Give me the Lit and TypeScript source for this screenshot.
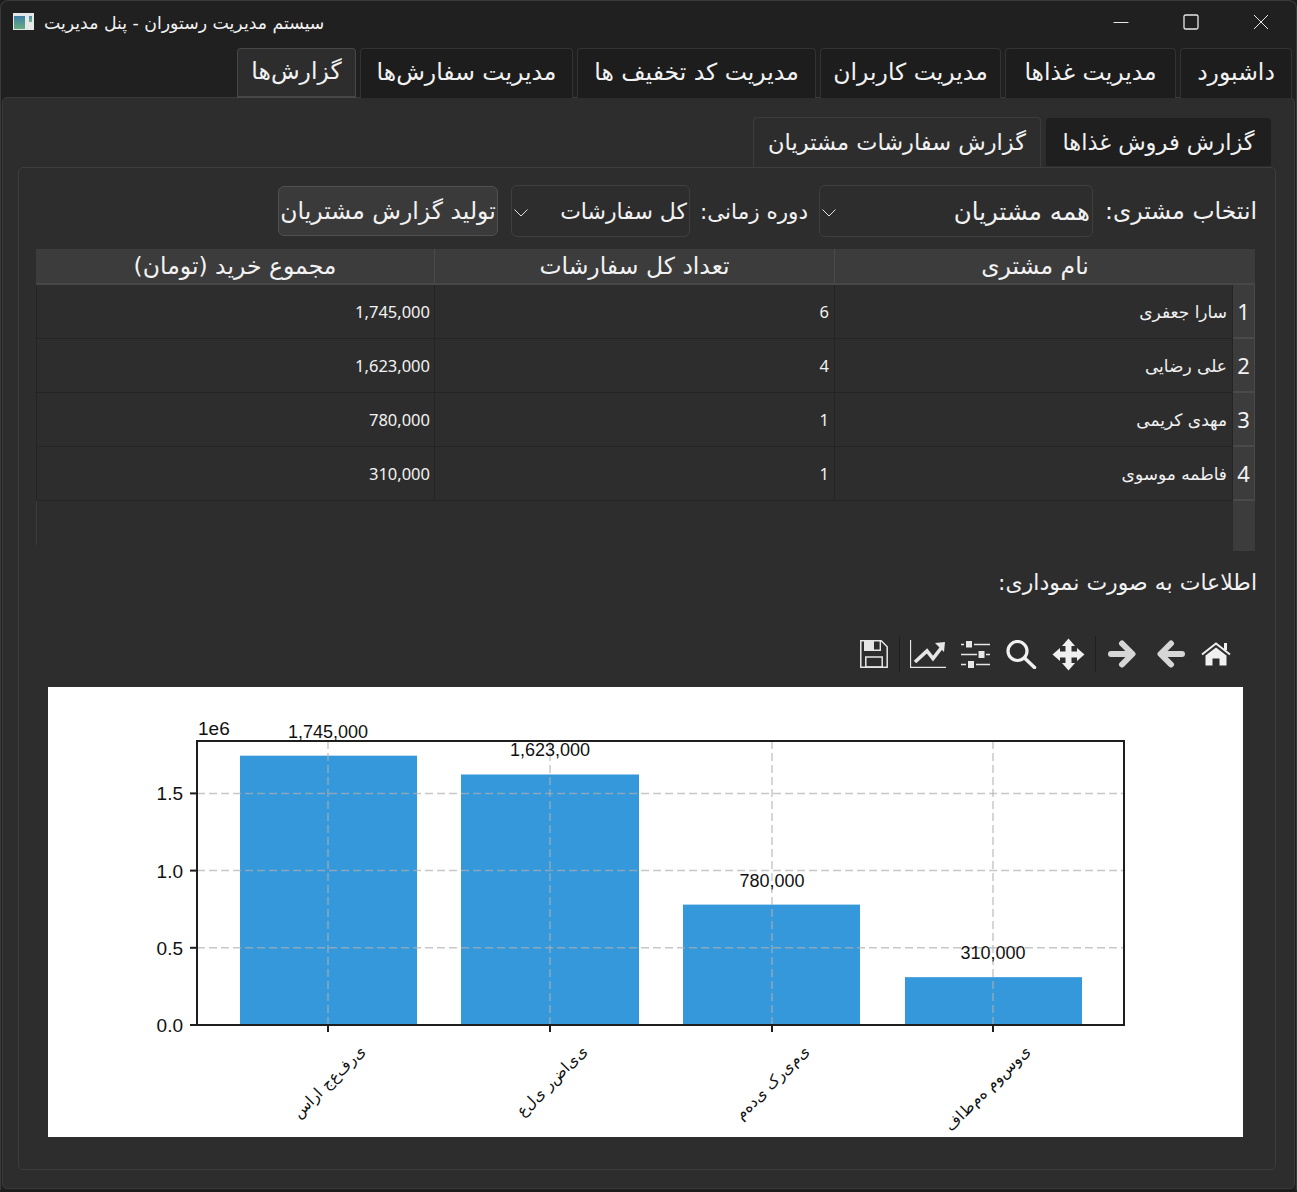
import { LitElement, css, html, svg } from 'lit';
import { customElement } from 'lit/decorators.js';

const rows = [
  ['سارا جعفری', '6', '1,745,000'],
  ['علی رضایی', '4', '1,623,000'],
  ['مهدی کریمی', '1', '780,000'],
  ['فاطمه موسوی', '1', '310,000'],
];

const tabs = [
  ['داشبورد', 112],
  ['مدیریت غذاها', 171],
  ['مدیریت کاربران', 181],
  ['مدیریت کد تخفیف ها', 239],
  ['مدیریت سفارش‌ها', 213],
  ['گزارش‌ها', 119],
] as const;

// plot area of the matplotlib figure, in figure coords
const plot = { left: 149, right: 1076, top: 54, bottom: 338 };
const scale = 284 / 1.84;
const bars = [
  { x: 192, w: 177, value: 1745000, label: '1,745,000', name: 'سارا جعفری', tick: 280 },
  { x: 413, w: 178, value: 1623000, label: '1,623,000', name: 'علی رضایی', tick: 502 },
  { x: 635, w: 177, value: 780000, label: '780,000', name: 'مهدی کریمی', tick: 724 },
  { x: 857, w: 177, value: 310000, label: '310,000', name: 'فاطمه موسوی', tick: 945 },
];
const yTicks = ['0.0', '0.5', '1.0', '1.5'];

// matplotlib draws the farsi names unshaped and left to right
const unshaped = (s: string) => [...s].join('\u200c');

function chart() {
  return html`<svg class="chart" viewBox="0 0 1195 450" width="1195" height="450">
    ${bars.map((b) => {
      const h = (b.value / 1e6) * scale;
      return svg`<rect x=${b.x} y=${plot.bottom - h} width=${b.w} height=${h} fill="#3498db"></rect>`;
    })}
    ${yTicks.map((t, i) => {
      const y = plot.bottom - i * 77.2;
      return svg`
        <line x1=${plot.left} x2=${plot.right} y1=${y} y2=${y} class="grid"></line>
        <line x1=${plot.left - 7} x2=${plot.left} y1=${y} y2=${y} class="tick"></line>
        <text x=${plot.left - 14} y=${y + 7} text-anchor="end" class="num">${t}</text>`;
    })}
    ${bars.map(
      (b) => svg`
        <line x1=${b.tick} x2=${b.tick} y1=${plot.top} y2=${plot.bottom} class="grid"></line>
        <line x1=${b.tick} x2=${b.tick} y1=${plot.bottom} y2=${plot.bottom + 7} class="tick"></line>
        <text x=${b.tick} y=${plot.bottom - (b.value / 1e6) * scale - 18} text-anchor="middle" class="val">${b.label}</text>
        <text transform="translate(${b.tick + 38} ${plot.bottom + 27}) rotate(-45)" text-anchor="end" class="name">${unshaped(b.name)}</text>`,
    )}
    <rect x=${plot.left} y=${plot.top} width=${plot.right - plot.left} height=${plot.bottom - plot.top} class="frame"></rect>
    <text x="150" y="48" class="num">1e6</text>
  </svg>`;
}

const icons = {
  save: html`<svg width="28" height="28" viewBox="0 0 28 28">
    <path d="M.8.8h20.4l6 6v20.4H.8z" fill="none" stroke="#e6e6e6" stroke-width="1.5"/>
    <path d="M4 1h10v10H4z" fill="#e6e6e6"/>
    <path d="M14 10.300h6.300V1" fill="none" stroke="#e6e6e6" stroke-width="1.4"/>
    <rect x="5.800" y="17" width="16.400" height="10" fill="none" stroke="#e6e6e6" stroke-width="1.5"/>
  </svg>`,
  lines: html`<svg width="36" height="28" viewBox="0 0 36 28">
    <path d="M.5 0v27.300H36" fill="none" stroke="#e6e6e6" stroke-width="1.300"/>
    <path d="M5 22l12-11 6 7.500L32 7" fill="none" stroke="#e6e6e6" stroke-width="3.600"/>
    <path d="M25 3l10-1-1 10z" fill="#e6e6e6"/>
  </svg>`,
  sliders: html`<svg width="29" height="27" viewBox="0 0 29 27">
    <path d="M0 3.500h3M13 3.500h16M0 13.500h16M25 13.500h4M0 23.500h5M15 23.500h14" stroke="#e6e6e6" stroke-width="1.600"/>
    <rect x="5" y="0" width="6" height="6.500" fill="#e6e6e6"/>
    <rect x="17.500" y="10" width="6" height="7" fill="#e6e6e6"/>
    <rect x="7" y="20" width="6" height="7" fill="#e6e6e6"/>
  </svg>`,
  zoom: html`<svg width="31" height="29" viewBox="0 0 31 29">
    <circle cx="11.500" cy="11" r="9.500" fill="none" stroke="#f0f0f0" stroke-width="3.200"/>
    <path d="M18.500 18l10 9.500" stroke="#f0f0f0" stroke-width="3.500" stroke-linecap="round"/>
  </svg>`,
  move: html`<svg width="33" height="33" viewBox="0 0 33 33">
    <path d="M16.500.5L23 8h-3.500v5.500H25V10l7.500 6.500L25 23v-3.500h-5.500V25H23l-6.500 7.500L10 25h3.500v-5.500H8V23L.5 16.500 8 10v3.500h5.500V8H10z" fill="#f0f0f0"/>
  </svg>`,
  forward: html`<svg width="29" height="28" viewBox="0 0 29 28">
    <path d="M3 14h21M14 3.500L24.500 14 14 24.500" fill="none" stroke="#d6d6d6" stroke-width="6" stroke-linecap="round" stroke-linejoin="round"/>
  </svg>`,
  back: html`<svg width="28" height="28" viewBox="0 0 28 28">
    <path d="M25 14H4M14 3.500L3.500 14 14 24.500" fill="none" stroke="#d6d6d6" stroke-width="6" stroke-linecap="round" stroke-linejoin="round"/>
  </svg>`,
  home: html`<svg width="30" height="24" viewBox="0 0 30 24">
    <path d="M1 12.500L15 1.500 29 12.500" fill="none" stroke="#f0f0f0" stroke-width="2"/>
    <rect x="23" y="1" width="3" height="7" fill="#f0f0f0"/>
    <path d="M4.500 13.500L15 5.500l10.500 8v10h-7v-7h-7v7h-7z" fill="#f0f0f0"/>
  </svg>`,
};

const chevron = html`<svg class="chev" width="14" height="8" viewBox="0 0 14 8"><path d="M.5 .5L7 7l6.500-6.500" fill="none" stroke="#e0e0e0" stroke-width="1"/></svg>`;

@customElement('app-root')
export class AppRoot extends LitElement {
  static styles = css`
    :host {
      display: block;
      width: 1297px;
      height: 1192px;
      overflow: hidden;
      background: #1c1c1c;
      font-family: 'DejaVu Sans', sans-serif;
      color: #f2f2f2;
    }
    .window {
      box-sizing: border-box;
      height: 1190px;
      background: #202020;
      border: 1px solid #3a3a3a;
      border-bottom: none;
      border-radius: 8px 8px 0 0;
    }
    .titlebar {
      display: flex;
      align-items: center;
      height: 46px;
      padding-left: 12px;
      gap: 10px;
      font-size: 17.3px;
    }
    .logo {
      width: 21px;
      height: 17px;
      margin-top: -5px;
      background:
        linear-gradient(#3d7fa5, #68ad80) 1px 3px / 11px 13px no-repeat,
        linear-gradient(#4a8fb0, #78b088) 16px 3px / 3px 6px no-repeat,
        #e4e8e8;
    }
    .title {
      flex: 1;
      margin-top: -2px;
      text-align: left;
    }
    .winbtns {
      display: flex;
      margin-top: -4px;
    }
    .winbtn {
      width: 70px;
      display: flex;
      justify-content: center;
    }
    .winbtn svg {
      display: block;
    }
    .tabs {
      display: flex;
      flex-direction: row-reverse;
      height: 51px;
      padding-right: 4px;
      gap: 4px;
    }
    .tab {
      box-sizing: border-box;
      height: 50px;
      margin-top: 1px;
      display: flex;
      align-items: center;
      justify-content: center;
      font-size: 23.5px;
      background: #1d1d1d;
      border: 1px solid #333;
      border-bottom: none;
      border-radius: 4px 4px 0 0;
      padding-bottom: 4px;
      white-space: nowrap;
    }
    .tab.on {
      background: #2d2d2d;
      border-color: #474747;
      border-bottom: 2px solid #474747;
      position: relative;
      z-index: 1;
    }
    .panel {
      box-sizing: border-box;
      margin: -1px 1px 0;
      height: 1092px;
      background: #2d2d2d;
      border: 1px solid #3a3a3a;
      border-radius: 5px;
      padding: 19px 18px 0 15px;
    }
    .subtabs {
      display: flex;
      flex-direction: row-reverse;
      height: 50px;
      padding-right: 5px;
      gap: 5px;
    }
    .subtab {
      display: flex;
      align-items: center;
      justify-content: center;
      box-sizing: border-box;
      height: 50px;
      font-size: 22.5px;
      border: 1px solid #3c3c3c;
      border-bottom: none;
      border-radius: 4px 4px 0 0;
      padding-bottom: 2px;
      white-space: nowrap;
    }
    .subtab.on {
      height: 48px;
      margin-top: 1px;
      background: #1f1f1f;
      border-color: #1f1f1f;
    }
    .box {
      box-sizing: border-box;
      height: 1003px;
      border: 1px solid #3d3d3d;
      border-radius: 5px;
      padding: 17px 0 0 17px;
    }
    .filters {
      display: flex;
      flex-direction: row-reverse;
      align-items: center;
      height: 52px;
      width: 1221px;
      font-size: 23.5px;
    }
    .lbl {
      white-space: nowrap;
    }
    .lbl-customer {
      width: 164px;
    }
    .lbl-period {
      width: 129px;
      text-align: right;
      padding-right: 11px;
      box-sizing: border-box;
      font-size: 21.5px;
    }
    .combo {
      box-sizing: border-box;
      height: 52px;
      display: flex;
      align-items: center;
      justify-content: space-between;
      border: 1px solid #3f3f3f;
      border-radius: 6px;
      padding: 0 2px 0 0;
      white-space: nowrap;
    }
    .combo-customer {
      width: 274px;
      font-size: 24.5px;
    }
    .combo-period {
      width: 179px;
      font-size: 22px;
    }
    .combo .chev {
      margin: 4px 0 0 2px;
    }
    .btn {
      box-sizing: border-box;
      width: 220px;
      height: 50px;
      margin-right: 13px;
      display: flex;
      align-items: center;
      justify-content: center;
      background: #3a3a3a;
      border: 1px solid #505050;
      border-radius: 6px;
      white-space: nowrap;
    }
    .table {
      display: grid;
      grid-template-columns: 399px 400px 398px 22px;
      grid-template-rows: 36px repeat(4, 54px) 50px;
      width: 1219px;
      margin-top: 12px;
    }
    .th {
      box-sizing: border-box;
      background: #3c3c3c;
      border-right: 1px solid #4a4a4a;
      border-bottom: 2px solid #474747;
      display: flex;
      align-items: center;
      justify-content: center;
      font-size: 23.5px;
    }
    .th.wide {
      grid-column: span 2;
      border-right: none;
      padding-right: 20px;
    }
    .td {
      box-sizing: border-box;
      border-right: 1px solid #242424;
      border-bottom: 1px solid #242424;
      display: flex;
      align-items: center;
      justify-content: flex-end;
      padding-right: 5px;
      font-family: 'Noto Sans', 'DejaVu Sans', sans-serif;
      font-size: 16.5px;
    }
    .td.first {
      border-left: 1px solid #242424;
      padding-right: 4px;
    }
    .td.name {
      font-family: 'DejaVu Sans', sans-serif;
      font-size: 17px;
      justify-content: flex-start;
    }
    .rh {
      box-sizing: border-box;
      background: #3c3c3c;
      border-right: 1px solid #4a4a4a;
      border-bottom: 2px solid #4a4a4a;
      display: flex;
      align-items: center;
      justify-content: center;
      font-family: 'Noto Sans', 'DejaVu Sans', sans-serif;
      font-size: 22px;
    }
    .rh.last {
      border: none;
    }
    .blank {
      grid-column: span 3;
      border-left: 1px solid #3a3a3a;
      margin-bottom: 6px;
    }
    .caption {
      direction: rtl;
      width: 1221px;
      font-size: 22px;
      margin-top: 15px;
      height: 34px;
      line-height: 34px;
    }
    .toolbar {
      display: flex;
      align-items: center;
      justify-content: flex-end;
      width: 1219px;
      box-sizing: border-box;
      height: 40px;
      margin-top: 34px;
      padding-right: 24px;
    }
    .toolbar svg {
      display: block;
      flex: none;
    }
    .sep {
      width: 1px;
      height: 36px;
      background: #1f1f1f;
    }
    .gap-10 {
      margin-left: 10px;
    }
    .gap-11 {
      margin-left: 11px;
    }
    .gap-12 {
      margin-left: 12px;
    }
    .gap-15 {
      margin-left: 15px;
    }
    .gap-16 {
      margin-left: 16px;
    }
    .gap-20 {
      margin-left: 20px;
    }
    .chartbox {
      margin: 13px 0 0 12px;
      background: #fff;
      width: 1195px;
      height: 450px;
    }
    .chart {
      display: block;
      font-family: 'Liberation Sans', sans-serif;
    }
    .chart .grid {
      stroke: #b0b0b0;
      stroke-opacity: 0.7;
      stroke-width: 1.5;
      stroke-dasharray: 8 4;
    }
    .chart .tick,
    .chart .frame {
      stroke: #1e1e1e;
      stroke-width: 2;
      fill: none;
    }
    .chart .num {
      font-size: 19px;
      fill: #111;
    }
    .chart .val {
      font-size: 18px;
      fill: #111;
    }
    .chart .name {
      font-family: 'DejaVu Sans', sans-serif;
      font-size: 15.5px;
      fill: #111;
      direction: ltr;
      unicode-bidi: bidi-override;
    }
  `;

  render() {
    return html`
      <div class="window">
        <div class="titlebar">
          <div class="logo"></div>
          <div class="title" dir="rtl">سیستم مدیریت رستوران - پنل مدیریت</div>
          <div class="winbtns">
            <div class="winbtn">
              <svg width="16" height="16" viewBox="0 0 16 16"><path d="M.5 8.500h15" stroke="#e8e8e8"/></svg>
            </div>
            <div class="winbtn">
              <svg width="16" height="16" viewBox="0 0 16 16"><rect x="1" y="1" width="14" height="14" rx="1.500" fill="none" stroke="#e8e8e8" stroke-width="1.300"/></svg>
            </div>
            <div class="winbtn">
              <svg width="16" height="16" viewBox="0 0 16 16"><path d="M1 1l14 14M15 1L1 15" stroke="#e8e8e8"/></svg>
            </div>
          </div>
        </div>
        <div class="tabs">
          ${tabs.map(
            ([t, w], i) => html`<div class="tab ${i === 5 ? 'on' : ''}" style="width:${w}px">${t}</div>`,
          )}
        </div>
        <div class="panel">
          <div class="subtabs">
            <div class="subtab on" style="width:225px">گزارش فروش غذاها</div>
            <div class="subtab" style="width:288px">گزارش سفارشات مشتریان</div>
          </div>
          <div class="box">
            <div class="filters">
              <span class="lbl lbl-customer" dir="rtl">انتخاب مشتری:</span>
              <div class="combo combo-customer" dir="rtl"><span>همه مشتریان</span>${chevron}</div>
              <span class="lbl lbl-period" dir="rtl">دوره زمانی:</span>
              <div class="combo combo-period" dir="rtl"><span>کل سفارشات</span>${chevron}</div>
              <div class="btn">تولید گزارش مشتریان</div>
            </div>
            <div class="table">
              <div class="th">مجموع خرید (تومان)</div>
              <div class="th">تعداد کل سفارشات</div>
              <div class="th wide">نام مشتری</div>
              ${rows.map(
                ([name, count, total], i) => html`
                  <div class="td first">${total}</div>
                  <div class="td">${count}</div>
                  <div class="td name" dir="rtl">${name}</div>
                  <div class="rh">${i + 1}</div>
                `,
              )}
              <div class="blank"></div>
              <div class="rh last"></div>
            </div>
            <div class="caption">اطلاعات به صورت نموداری:</div>
            <div class="toolbar">
              ${icons.save}
              <div class="sep gap-11"></div>
              <div class="gap-10">${icons.lines}</div>
              <div class="gap-15">${icons.sliders}</div>
              <div class="gap-16">${icons.zoom}</div>
              <div class="gap-15">${icons.move}</div>
              <div class="sep gap-10"></div>
              <div class="gap-12">${icons.forward}</div>
              <div class="gap-20">${icons.back}</div>
              <div class="gap-16">${icons.home}</div>
            </div>
            <div class="chartbox">${chart()}</div>
          </div>
        </div>
      </div>
    `;
  }
}
